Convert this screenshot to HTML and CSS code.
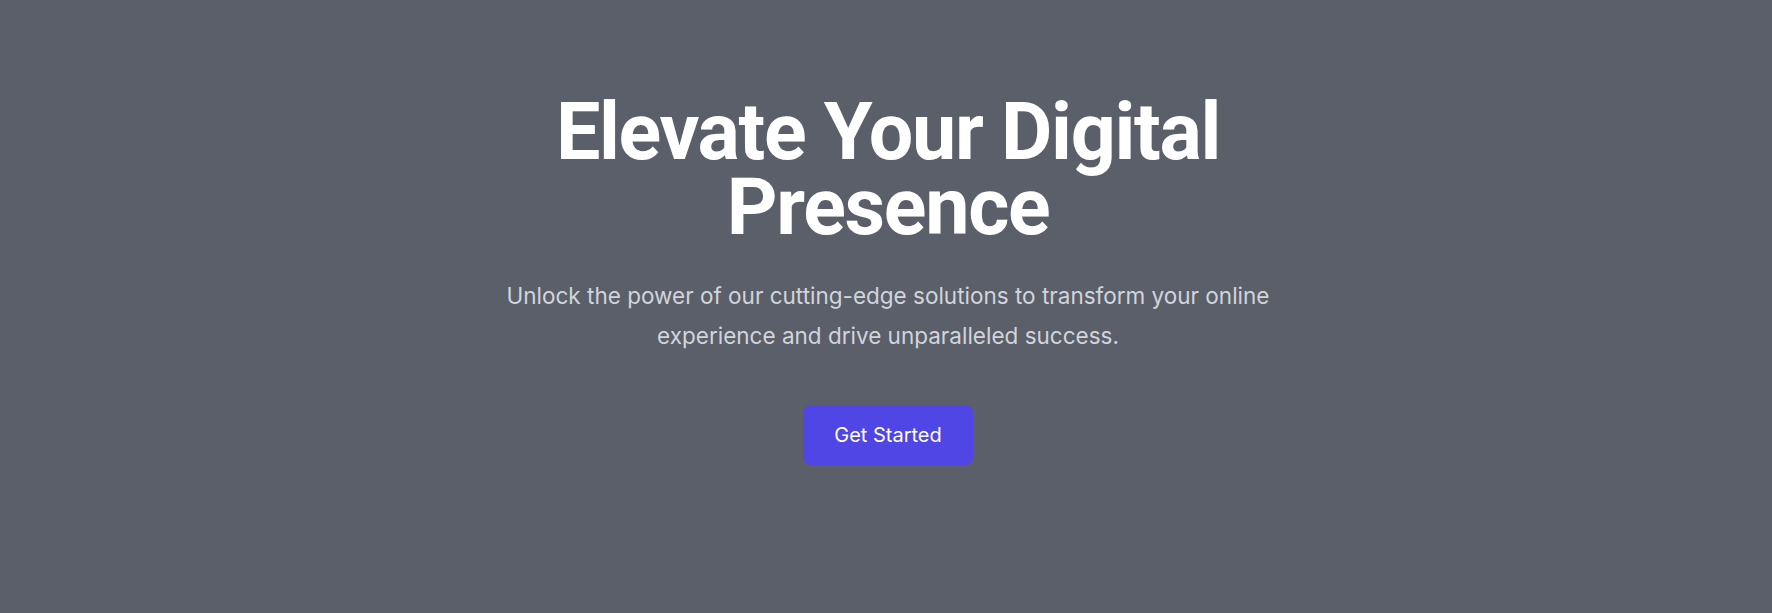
FILE: index.html
```html
<!DOCTYPE html>
<html lang="en">
<head>
<meta charset="utf-8">
<title>Elevate Your Digital Presence</title>
<link rel="stylesheet" href="styles.css">
</head>
<body>
<section class="hero">
  <div class="hero-inner">
    <h1 class="hero-title">Elevate Your Digital<br>Presence</h1>
    <p class="hero-text">Unlock the power of our cutting-edge solutions to transform your online experience and drive unparalleled success.</p>
    <a class="hero-button" href="#">Get Started</a>
  </div>
</section>
</body>
</html>
```

FILE: styles.css
```css
* { box-sizing: border-box; }
html, body { margin: 0; padding: 0; }
body {
  background: #5b5f6a;
  font-family: Inter, "Noto Sans", sans-serif;
  min-height: 613px;
}
.hero {
  display: flex;
  justify-content: center;
  padding: 95px 0 0 4px;
}
.hero-inner {
  display: flex;
  flex-direction: column;
  align-items: center;
  text-align: center;
  width: 820px;
}
.hero-title {
  margin: 0;
  font-family: Roboto, "Liberation Sans", sans-serif;
  font-weight: 700;
  font-size: 79px;
  line-height: 75px;
  letter-spacing: -1.3px;
  color: #ffffff;
}
.hero-text {
  margin: 31px 0 0;
  max-width: 790px;
  font-size: 22.5px;
  line-height: 40px;
  color: #d1d5db;
}
.hero-button {
  margin-top: 49px;
  display: inline-block;
  padding: 16px 31px;
  font-size: 20px;
  line-height: 28px;
  color: #ffffff;
  background: #4f46e5;
  border-radius: 8px;
  text-decoration: none;
}
```
